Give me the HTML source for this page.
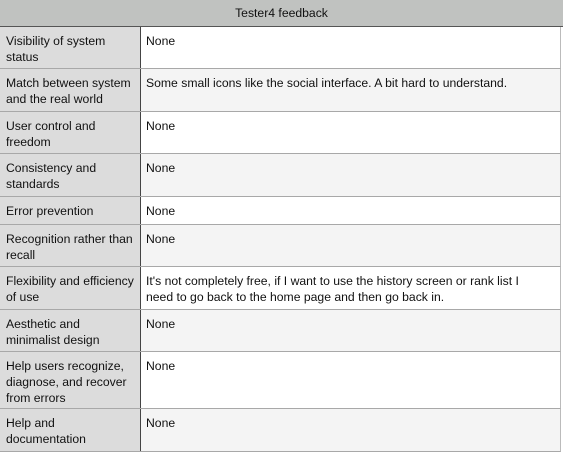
<!DOCTYPE html>
<html><head><style>
body{margin:0;width:563px;height:453px;background:#fff;font-family:"Liberation Sans",sans-serif;font-size:12.2px;color:#111;overflow:hidden}
.h{position:absolute;left:0;top:0;width:563px;height:26px;background:#c0c2c0;border-bottom:1px solid #555;text-align:center;line-height:26px}
.r{position:absolute;left:0;width:560px;border-bottom:1px solid #a8a8a8;border-right:1px solid #bbb}
.l{position:absolute;left:0;top:0;bottom:0;width:134px;background:#dcdcdc;padding:6px 0 0 6px;line-height:16px;border-right:1px solid #444;white-space:nowrap}
.v{position:absolute;left:146px;top:6px;right:4px;line-height:16px;white-space:nowrap}
</style></head><body>
<div class="h">Tester4 feedback</div>
<div class="r" style="top:27px;height:41px;background:#fff"><div class="l">Visibility of system<br>status</div><div class="v">None</div></div>
<div class="r" style="top:69px;height:42px;background:#f4f4f4"><div class="l">Match between system<br>and the real world</div><div class="v">Some small icons like the social interface. A bit hard to understand.</div></div>
<div class="r" style="top:112px;height:41px;background:#fff"><div class="l">User control and<br>freedom</div><div class="v">None</div></div>
<div class="r" style="top:154px;height:42px;background:#f4f4f4"><div class="l">Consistency and<br>standards</div><div class="v">None</div></div>
<div class="r" style="top:197px;height:27px;background:#fff"><div class="l">Error prevention</div><div class="v">None</div></div>
<div class="r" style="top:225px;height:41px;background:#f4f4f4"><div class="l">Recognition rather than<br>recall</div><div class="v">None</div></div>
<div class="r" style="top:267px;height:42px;background:#fff"><div class="l">Flexibility and efficiency<br>of use</div><div class="v">It's not completely free, if I want to use the history screen or rank list I<br>need to go back to the home page and then go back in.</div></div>
<div class="r" style="top:310px;height:41px;background:#f4f4f4"><div class="l">Aesthetic and<br>minimalist design</div><div class="v">None</div></div>
<div class="r" style="top:352px;height:56px;background:#fff"><div class="l">Help users recognize,<br>diagnose, and recover<br>from errors</div><div class="v">None</div></div>
<div class="r" style="top:409px;height:42px;background:#f4f4f4"><div class="l">Help and<br>documentation</div><div class="v">None</div></div>
</body></html>
